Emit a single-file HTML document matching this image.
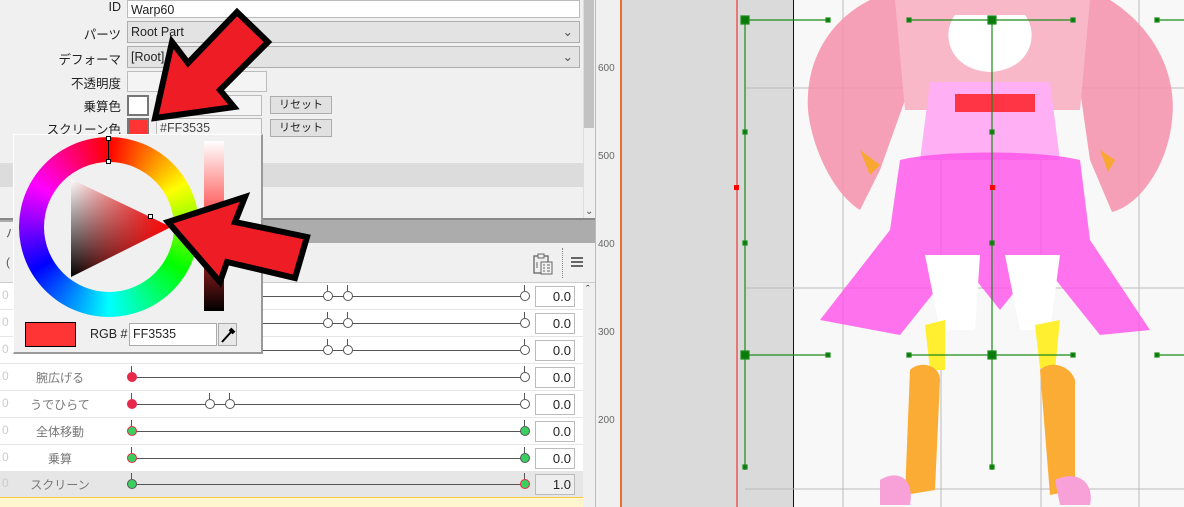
<!DOCTYPE html>
<html><head><meta charset="utf-8"><style>
*{box-sizing:border-box;margin:0;padding:0}
body{width:1184px;height:507px;overflow:hidden;position:relative;background:#f0f0f0;font-family:"Liberation Sans","Noto Sans CJK JP",sans-serif;font-size:12px;color:#222}
.a{position:absolute}
.lbl{position:absolute;right:1063px;text-align:right;font-size:12.5px;color:#222}
.inp{position:absolute;border:1px solid #bcbcbc;background:#fff;font-size:12.5px;padding-left:3px;line-height:18px}
.sel{background:#e3e3e3;border-color:#adadad}
.btn{position:absolute;background:#e1e1e1;border:1px solid #adadad;font-size:11px;text-align:center;line-height:16px}
.row{position:absolute;left:0;width:583px;height:27px;border-bottom:1px solid #e6e6e6;background:#fff}
.nm{position:absolute;left:20px;width:80px;text-align:center;top:5px;color:#777;font-size:12px}
.ln{position:absolute;left:132px;width:393px;top:13px;height:1px;background:#555}
.k{position:absolute;width:10px;height:10px;border-radius:50%;border:1.5px solid #555;background:#fff;top:8px}
.k:before{content:"";position:absolute;left:3px;top:-7px;width:1px;height:6px;background:#555}
.v{position:absolute;left:535px;top:3px;width:40px;height:21px;border:1px solid #bbb;background:#fff;text-align:right;padding-right:3px;line-height:19px;font-size:13px}
.z{position:absolute;left:2px;top:5px;color:#ccc;font-size:12px}
</style></head><body>
<div class="lbl" style="top:0px">ID</div>
<div class="inp" style="left:127px;top:0;width:453px;height:18px">Warp60</div>
<div class="lbl" style="top:24px">パーツ</div>
<div class="inp sel" style="left:127px;top:21px;width:453px;height:22px;line-height:20px">Root Part<span class="a" style="right:6px;top:0;color:#555">&#8964;</span></div>
<div class="lbl" style="top:49px">デフォーマ</div>
<div class="inp sel" style="left:127px;top:46px;width:453px;height:22px;line-height:20px">[Root]<span class="a" style="right:6px;top:0;color:#555">&#8964;</span></div>
<div class="lbl" style="top:73px">不透明度</div>
<div class="inp" style="left:127px;top:71px;width:140px;height:21px;background:#f4f4f4"></div>
<div class="lbl" style="top:96px">乗算色</div>
<div class="a" style="left:127px;top:95px;width:22px;height:21px;border:2px solid #777;background:#fff"></div>
<div class="inp" style="left:156px;top:95px;width:106px;height:21px;background:#f4f4f4"></div>
<div class="btn" style="left:270px;top:96px;width:62px;height:18px">リセット</div>
<div class="lbl" style="top:119px">スクリーン色</div>
<div class="a" style="left:127px;top:118px;width:22px;height:21px;border:2px solid #777;background:#ff3535"></div>
<div class="inp" style="left:156px;top:118px;width:106px;height:21px;background:#f4f4f4;color:#444">#FF3535</div>
<div class="btn" style="left:270px;top:119px;width:62px;height:18px">リセット</div>
<div class="a" style="left:0;top:163px;width:583px;height:24px;background:#dcdcdc"></div>
<div class="a" style="left:583px;top:0;width:12px;height:218px;background:#f0f0f0;border-left:1px solid #ddd"></div>
<div class="a" style="left:584px;top:0;width:10px;height:128px;background:#c2c2c2"></div>
<div class="a" style="left:585px;top:206px;font-size:10px;color:#555">&#8964;</div>
<div class="a" style="left:0;top:218px;width:595px;height:2px;background:#888"></div>
<div class="a" style="left:0;top:220px;width:595px;height:23px;background:#acacac"></div>
<div class="a" style="left:0;top:222px;width:16px;height:21px;background:#f0f0f0;color:#555;padding:2px 0 0 6px">パ</div>
<div class="a" style="left:0;top:243px;width:595px;height:40px;background:#f0f0f0;border-bottom:1px solid #ccc"></div>
<div class="a" style="left:6px;top:255px;color:#555">(</div>
<svg class="a" style="left:532px;top:252px" width="22" height="24"><rect x="2" y="4" width="14" height="17" fill="none" stroke="#666" stroke-width="1.3"/><rect x="6" y="2" width="6" height="4" fill="#f0f0f0" stroke="#666"/><rect x="9" y="10" width="11" height="12" fill="#f0f0f0" stroke="#666"/><path d="M11 13h2M15 13h3M11 16h2M15 16h3M11 19h2M15 19h3M5 10v6" stroke="#666"/></svg>
<div class="a" style="left:562px;top:248px;height:30px;border-left:1px dotted #888"></div>
<div class="a" style="left:571px;top:257px;width:12px;height:2px;background:#666;box-shadow:0 4px #666,0 8px #666"></div>
<div class="a" style="left:583px;top:283px;width:12px;height:224px;background:#f0f0f0"></div>
<div class="a" style="left:586px;top:284px;font-size:11px;color:#333">&#710;</div>
<div class="row" style="top:283px"><span class="z">0</span><div class="ln"></div><div class="k" style="left:323px"></div><div class="k" style="left:343px"></div><div class="k" style="left:520px"></div><div class="v">0.0</div></div>
<div class="row" style="top:310px"><span class="z">0</span><div class="ln"></div><div class="k" style="left:323px"></div><div class="k" style="left:343px"></div><div class="k" style="left:520px"></div><div class="v">0.0</div></div>
<div class="row" style="top:337px"><span class="z">0</span><div class="ln"></div><div class="k" style="left:323px"></div><div class="k" style="left:343px"></div><div class="k" style="left:520px"></div><div class="v">0.0</div></div>
<div class="row" style="top:364px"><span class="z">0</span><span class="nm">腕広げる</span><div class="ln"></div><div class="k" style="left:127px;background:#e8284a;border-color:#e8284a"></div><div class="k" style="left:520px"></div><div class="v">0.0</div></div>
<div class="row" style="top:391px"><span class="z">0</span><span class="nm">うでひらて</span><div class="ln"></div><div class="k" style="left:127px;background:#e8284a;border-color:#e8284a"></div><div class="k" style="left:205px"></div><div class="k" style="left:225px"></div><div class="k" style="left:520px"></div><div class="v">0.0</div></div>
<div class="row" style="top:418px"><span class="z">0</span><span class="nm">全体移動</span><div class="ln"></div><div class="k" style="left:127px;background:#3ad060;border-color:#e8284a"></div><div class="k" style="left:520px;background:#3ad060"></div><div class="v">0.0</div></div>
<div class="row" style="top:445px"><span class="z">0</span><span class="nm">乗算</span><div class="ln"></div><div class="k" style="left:127px;background:#3ad060;border-color:#e8284a"></div><div class="k" style="left:520px;background:#3ad060"></div><div class="v">0.0</div></div>
<div class="row" style="top:471px;background:#e6e6e6;height:26px"><span class="z">0</span><span class="nm">スクリーン</span><div class="ln"></div><div class="k" style="left:127px;background:#3ad060"></div><div class="k" style="left:520px;background:#3ad060;border-color:#e8284a"></div><div class="v" style="background:#eee">1.0</div></div>
<div class="a" style="left:0;top:497px;width:583px;height:10px;background:#fff6cf;border-top:1px solid #f5c842"></div>
<div class="a" style="left:595px;top:0;width:26px;height:507px;background:#f0f0f0;border-left:1px solid #bbb"></div>
<div class="a" style="left:598px;top:63px;color:#666;font-size:10px">600</div>
<div class="a" style="left:598px;top:151px;color:#666;font-size:10px">500</div>
<div class="a" style="left:598px;top:239px;color:#666;font-size:10px">400</div>
<div class="a" style="left:598px;top:327px;color:#666;font-size:10px">300</div>
<div class="a" style="left:598px;top:415px;color:#666;font-size:10px">200</div>
<div class="a" style="left:620px;top:0;width:2px;height:507px;background:#e8702a"></div>
<div class="a" style="left:622px;top:0;width:171px;height:507px;background:#dadada"></div>
<div class="a" style="left:736px;top:0;width:1.5px;height:507px;background:#e87878"></div>
<div class="a" style="left:793px;top:0;width:1px;height:507px;background:#111"></div>
<div class="a" style="left:794px;top:0;width:390px;height:507px;background:#f8f8f8"></div>
<svg class="a" style="left:0;top:0" width="1184" height="507">
 <g stroke="#bbb" stroke-width="1"><path d="M745 88H1184M745 288H1184M745 489H1184M843 0V507M941 0V507M1041 0V507M1139 0V507"/></g>
 <g>
  <path d="M870 0 C830 20 805 60 808 110 C812 150 835 195 860 210 L880 170 L905 100 L900 0 Z" fill="#f590aa" opacity=".85"/>
  <path d="M1110 0 C1150 25 1178 70 1172 120 C1168 165 1140 205 1112 212 L1090 160 L1080 90 L1085 0 Z" fill="#f590aa" opacity=".85"/>
  <path d="M895 0 H1090 L1080 110 L905 110 Z" fill="#f9b8c8"/>
  <path d="M955 15 C940 35 950 70 990 72 C1030 70 1040 35 1025 15 Z" fill="#fff"/>
  <path d="M930 82 H1050 L1060 160 H920 Z" fill="#ffb0f4"/>
  <rect x="955" y="94" width="80" height="18" fill="#ff3545"/>
  <path d="M900 160 C940 150 1040 150 1080 160 L1090 240 L1150 330 L1100 335 L1040 260 L1000 310 L960 260 L900 335 L820 320 L890 230 Z" fill="#ff50ea" opacity=".8"/>
  <path d="M925 255 H980 L975 330 L940 330 Z" fill="#fff"/>
  <path d="M1005 255 H1060 L1050 330 L1020 330 Z" fill="#fff"/>
  <path d="M925 325 L945 320 L945 370 L930 370 Z" fill="#ffef30"/>
  <path d="M1035 325 L1060 320 L1055 370 L1040 368 Z" fill="#ffef30"/>
  <path d="M910 370 C920 360 940 365 940 380 L935 490 L905 495 Z" fill="#fbac34"/>
  <path d="M1040 370 C1050 360 1070 365 1075 380 L1075 490 L1050 495 Z" fill="#fbac34"/>
  <path d="M880 480 C895 470 915 475 910 505 H880 Z M1055 480 C1075 470 1095 480 1090 505 H1060 Z" fill="#f8a0d8"/>
  <path d="M860 150 L880 165 L870 175 Z M1100 150 L1115 160 L1108 172 Z" fill="#f8a830"/>
 </g>
 <g stroke="#1a8a1a" stroke-width="1.2" fill="#0a7a0a">
  <path d="M745 20H828M909 20H1073M1157 20H1184M745 355H828M909 355H1073M1157 355H1184M745 20V470M992 20V470" fill="none"/>
  <rect x="741" y="16" width="8" height="8"/><rect x="988" y="16" width="8" height="8"/>
  <rect x="741" y="351" width="8" height="8"/><rect x="988" y="351" width="8" height="8"/>
  <rect x="826" y="18" width="4" height="4"/><rect x="907" y="18" width="4" height="4"/><rect x="1071" y="18" width="4" height="4"/><rect x="1155" y="18" width="4" height="4"/>
  <rect x="826" y="353" width="4" height="4"/><rect x="907" y="353" width="4" height="4"/><rect x="1071" y="353" width="4" height="4"/><rect x="1155" y="353" width="4" height="4"/>
  <rect x="743" y="130" width="4" height="4"/><rect x="990" y="130" width="4" height="4"/><rect x="743" y="241" width="4" height="4"/><rect x="990" y="241" width="4" height="4"/><rect x="743" y="465" width="4" height="4"/><rect x="990" y="465" width="4" height="4"/>
 </g>
 <rect x="734" y="185" width="5" height="5" fill="#f00"/><rect x="990" y="185" width="5" height="5" fill="#f00"/>
</svg>
<div class="a" style="left:13px;top:134px;width:250px;height:220px;background:#f0f0f0;border:1px solid #fff;border-right:2px solid #999;border-bottom:2px solid #999"></div>
<div class="a" style="left:19px;top:137px;width:180px;height:180px;border-radius:50%;background:conic-gradient(#f00,#ff0 60deg,#0f0 120deg,#0ff 180deg,#00f 240deg,#f0f 300deg,#f00)"></div>
<div class="a" style="left:44px;top:162px;width:130px;height:130px;border-radius:50%;background:#f0f0f0"></div>
<div class="a" style="left:71px;top:179px;width:100px;height:98px;clip-path:polygon(0 0,100% 49%,0 100%);background:linear-gradient(to right,rgba(255,0,0,0),#f00),linear-gradient(#fff,#000)"></div>
<div class="a" style="left:108px;top:138px;width:1px;height:24px;background:#000"></div>
<div class="a" style="left:106px;top:136px;width:5px;height:5px;border:1px solid #000;background:#fff"></div>
<div class="a" style="left:106px;top:159px;width:5px;height:5px;border:1px solid #000;background:#fff"></div>
<div class="a" style="left:148px;top:214px;width:5px;height:5px;border:1px solid #000;background:#fff"></div>
<div class="a" style="left:204px;top:141px;width:20px;height:170px;background:linear-gradient(#fff,#ff3535 50%,#000)"></div>
<div class="a" style="left:25px;top:322px;width:51px;height:25px;background:#ff3535;border:1px solid #000"></div>
<div class="a" style="left:90px;top:327px;font-size:12.5px">RGB #</div>
<div class="a" style="left:129px;top:323px;width:88px;height:23px;background:#fff;border:1px solid #aaa;font-size:12.5px;padding:3px 0 0 3px">FF3535</div>
<div class="a" style="left:218px;top:323px;width:19px;height:23px;background:#e8e8e8;border:1px solid #aaa"></div>
<svg class="a" style="left:219px;top:325px" width="18" height="20"><path d="M3 17 L12 7" stroke="#000" stroke-width="2"/><path d="M11 4 L15 8" stroke="#000" stroke-width="4"/></svg>
<svg class="a" style="left:0;top:0" width="400" height="300">
 <polygon points="155,118 172,42 188,63 237,12 268,42 220,90 234,107" fill="#ee1c25" stroke="#000" stroke-width="6" stroke-linejoin="miter"/>
 <polygon points="168,222 245,197 235,222 307,237 295,278 227,262 220,282" fill="#ee1c25" stroke="#000" stroke-width="6" stroke-linejoin="miter"/>
</svg>
</body></html>
